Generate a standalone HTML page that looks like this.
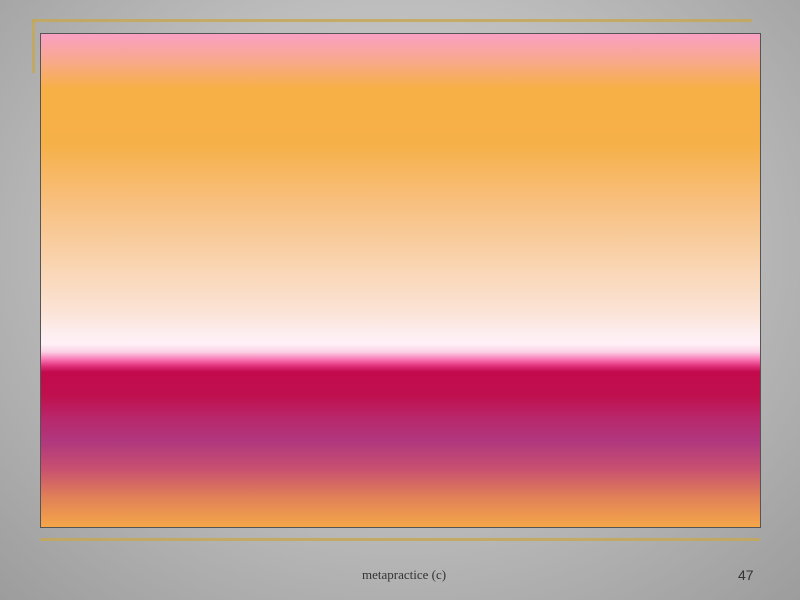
<!DOCTYPE html>
<html><head><style>
html,body{margin:0;padding:0;width:800px;height:600px;overflow:hidden}
body{background:radial-gradient(ellipse 600px 500px at 400px 250px,#d4d4d4 0%,#bdbdbd 50%,#9a9a9a 100%);position:relative;font-family:"Liberation Serif",serif}
.box{position:absolute;left:40px;top:33px;width:719px;height:493px;border:1px solid #555;
background:linear-gradient(to bottom,#f9a0c4 0px,#f8a890 25px,#f7b045 55px,#f6b048 110px,#f8c080 170px,#f9d4b0 230px,#fbe4d8 280px,#fdeef0 300px,#fef0f6 310px,#fbd0e4 318px,#f870b0 326px,#e0307a 332px,#c20a4c 338px,#c0104e 362px,#b8286c 385px,#b0387e 408px,#c85070 435px,#e08058 463px,#f5a848 494px);}
.gt{position:absolute;left:32px;top:19px;width:720px;height:3px;background:#c4a858;opacity:.85}
.gv{position:absolute;left:32px;top:19px;width:3px;height:54px;background:#c4a858;opacity:.85}
.gb{position:absolute;left:40px;top:538px;width:720px;height:3px;background:#c4a858;opacity:.85}
.ft{position:absolute;top:567px;font-size:13px;color:#333}
</style></head><body>
<div class="gt"></div><div class="gv"></div>
<div class="box"></div>
<div class="gb"></div>
<div class="ft" style="left:362px">metapractice (c)</div>
<div class="ft" style="left:738px;font-family:'Liberation Sans',sans-serif;font-size:14px">47</div>
</body></html>
